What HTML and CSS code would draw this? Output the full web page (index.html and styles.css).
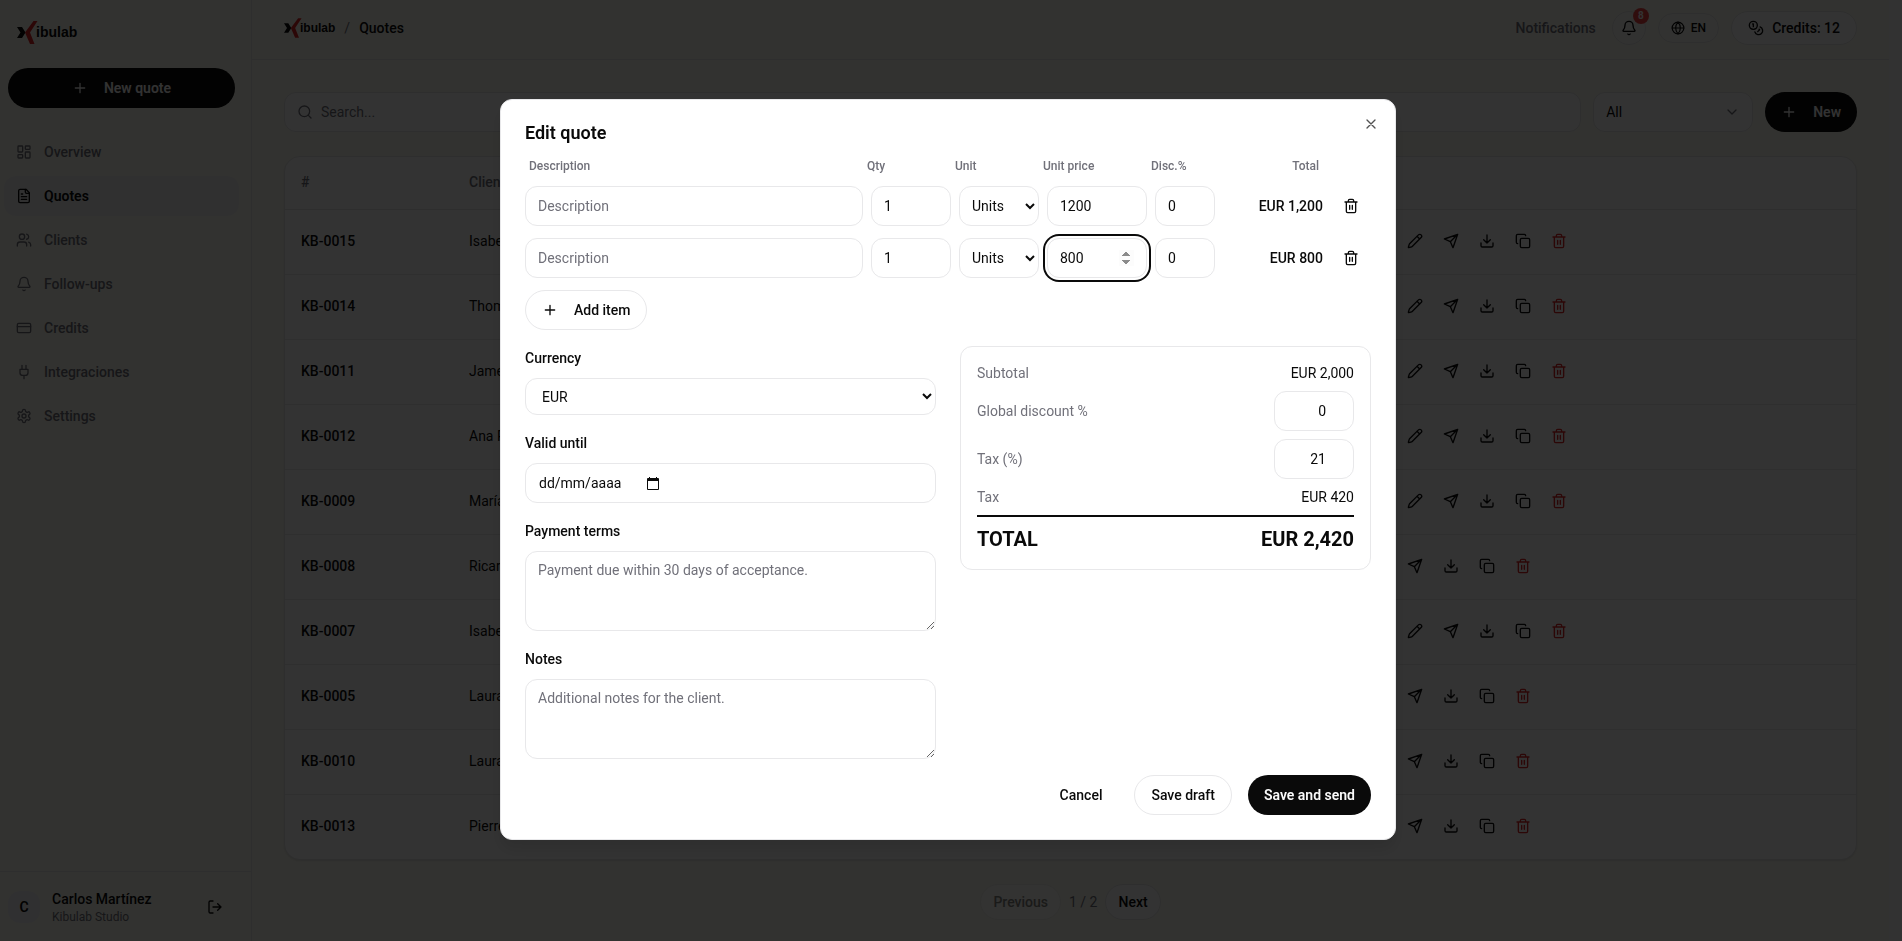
FILE: index.html
```
<!DOCTYPE html>
<html lang="en">
<head>
    <meta charset="UTF-8">
    <meta name="viewport" content="width=device-width, initial-scale=1.0">
    <title>Quotes - Kibulab</title>
    <link rel="stylesheet" href="styles.css">
</head>
<body>

<!-- Icon set -->
<svg class="sprite" aria-hidden="true">
    <symbol id="mark" viewBox="0 0 21 23">
        <path fill="#0a0a0a" d="M0 6h5l3.500 5.500L5 17H0l3.500-5.500z"/>
        <path fill="#dc2626" d="M16.500 0h4L13 11.500 17.500 23H13L8 11.500z"/>
    </symbol>
    <symbol id="plus" viewBox="0 0 24 24"><path d="M5 12h14M12 5v14"/></symbol>
    <symbol id="close" viewBox="0 0 24 24"><path d="M18 6 6 18M6 6l12 12"/></symbol>
    <symbol id="search" viewBox="0 0 24 24"><circle cx="11" cy="11" r="8"/><path d="m21 21-4.300-4.300"/></symbol>
    <symbol id="chevron" viewBox="0 0 24 24"><path d="m6 9 6 6 6-6"/></symbol>
    <symbol id="dashboard" viewBox="0 0 24 24"><rect x="3" y="3" width="7" height="9" rx="1"/><rect x="14" y="3" width="7" height="5" rx="1"/><rect x="14" y="12" width="7" height="9" rx="1"/><rect x="3" y="16" width="7" height="5" rx="1"/></symbol>
    <symbol id="file" viewBox="0 0 24 24"><path d="M15 2H6a2 2 0 0 0-2 2v16a2 2 0 0 0 2 2h12a2 2 0 0 0 2-2V7Z"/><path d="M14 2v4a2 2 0 0 0 2 2h4M10 9H8M16 13H8M16 17H8"/></symbol>
    <symbol id="users" viewBox="0 0 24 24"><path d="M16 21v-2a4 4 0 0 0-4-4H6a4 4 0 0 0-4 4v2"/><circle cx="9" cy="7" r="4"/><path d="M22 21v-2a4 4 0 0 0-3-3.870M16 3.130a4 4 0 0 1 0 7.750"/></symbol>
    <symbol id="bell" viewBox="0 0 24 24"><path d="M10.268 21a2 2 0 0 0 3.464 0"/><path d="M3.262 15.326A1 1 0 0 0 4 17h16a1 1 0 0 0 .74-1.673C19.410 13.956 18 12.499 18 8A6 6 0 0 0 6 8c0 4.499-1.411 5.956-2.738 7.326"/></symbol>
    <symbol id="card" viewBox="0 0 24 24"><rect x="2" y="5" width="20" height="14" rx="2"/><path d="M2 10h20"/></symbol>
    <symbol id="plug" viewBox="0 0 24 24"><path d="M12 22v-5M9 8V2M15 8V2M18 8v5a4 4 0 0 1-4 4h-4a4 4 0 0 1-4-4V8Z"/></symbol>
    <symbol id="settings" viewBox="0 0 24 24"><path d="M12.220 2h-.44a2 2 0 0 0-2 2v.18a2 2 0 0 1-1 1.730l-.43.25a2 2 0 0 1-2 0l-.15-.08a2 2 0 0 0-2.730.73l-.22.38a2 2 0 0 0 .73 2.730l.15.1a2 2 0 0 1 1 1.720v.51a2 2 0 0 1-1 1.740l-.15.09a2 2 0 0 0-.73 2.730l.22.38a2 2 0 0 0 2.730.73l.15-.08a2 2 0 0 1 2 0l.43.25a2 2 0 0 1 1 1.730V20a2 2 0 0 0 2 2h.44a2 2 0 0 0 2-2v-.18a2 2 0 0 1 1-1.730l.43-.25a2 2 0 0 1 2 0l.15.08a2 2 0 0 0 2.730-.73l.22-.39a2 2 0 0 0-.73-2.730l-.15-.08a2 2 0 0 1-1-1.740v-.5a2 2 0 0 1 1-1.740l.15-.09a2 2 0 0 0 .73-2.730l-.22-.38a2 2 0 0 0-2.730-.73l-.15.08a2 2 0 0 1-2 0l-.43-.25a2 2 0 0 1-1-1.730V4a2 2 0 0 0-2-2z"/><circle cx="12" cy="12" r="3"/></symbol>
    <symbol id="logout" viewBox="0 0 24 24"><path d="M9 21H5a2 2 0 0 1-2-2V5a2 2 0 0 1 2-2h4M16 17l5-5-5-5M21 12H9"/></symbol>
    <symbol id="globe" viewBox="0 0 24 24"><circle cx="12" cy="12" r="10"/><path d="M12 2a14.500 14.500 0 0 0 0 20 14.500 14.500 0 0 0 0-20M2 12h20"/></symbol>
    <symbol id="coins" viewBox="0 0 24 24"><circle cx="8" cy="8" r="6"/><path d="M18.090 10.370A6 6 0 1 1 10.340 18M7 6h1v4M16.710 13.880l.7.710-2.820 2.820"/></symbol>
    <symbol id="eye" viewBox="0 0 24 24"><path d="M2 12s4-7 10-7 10 7 10 7-4 7-10 7S2 12 2 12z"/><circle cx="12" cy="12" r="3"/></symbol>
    <symbol id="pencil" viewBox="0 0 24 24"><path d="M21.174 6.812a1 1 0 0 0-3.986-3.987L3.842 16.174a2 2 0 0 0-.5.830l-1.321 4.352a.5.5 0 0 0 .623.622l4.353-1.320a2 2 0 0 0 .83-.497zM15 5l4 4"/></symbol>
    <symbol id="send" viewBox="0 0 24 24"><path d="m22 2-7 20-4-9-9-4ZM22 2 11 13"/></symbol>
    <symbol id="download" viewBox="0 0 24 24"><path d="M21 15v4a2 2 0 0 1-2 2H5a2 2 0 0 1-2-2v-4M7 10l5 5 5-5M12 15V3"/></symbol>
    <symbol id="copy" viewBox="0 0 24 24"><rect x="8" y="8" width="14" height="14" rx="2"/><path d="M4 16c-1.100 0-2-.9-2-2V4c0-1.100.9-2 2-2h10c1.100 0 2 .9 2 2"/></symbol>
    <symbol id="trash" viewBox="0 0 24 24"><path d="M3 6h18M19 6v14c0 1-1 2-2 2H7c-1 0-2-1-2-2V6M8 6V4c0-1 1-2 2-2h4c1 0 2 1 2 2v2M10 11v6M14 11v6"/></symbol>
    <symbol id="calendar" viewBox="0 0 12 13"><path fill="currentColor" stroke="none" d="M1 1h1V0h1v1h6V0h1v1h1a1 1 0 0 1 1 1v10a1 1 0 0 1-1 1H1a1 1 0 0 1-1-1V2a1 1 0 0 1 1-1zm0 3v8h10V4z"/></symbol>
</svg>

<div class="app">
    <aside class="sidebar">
        <a class="logo brand" href="#" aria-label="Kibulab"><svg><use href="#mark"/></svg>ibulab</a>
        <button class="btn btn-primary new-quote"><svg class="icon"><use href="#plus"/></svg>New quote</button>
        <nav class="nav">
            <a href="#"><svg class="icon"><use href="#dashboard"/></svg>Overview</a>
            <a href="#" class="active"><svg class="icon"><use href="#file"/></svg>Quotes</a>
            <a href="#"><svg class="icon"><use href="#users"/></svg>Clients</a>
            <a href="#"><svg class="icon"><use href="#bell"/></svg>Follow-ups</a>
            <a href="#"><svg class="icon"><use href="#card"/></svg>Credits</a>
            <a href="#"><svg class="icon"><use href="#plug"/></svg>Integraciones</a>
            <a href="#"><svg class="icon"><use href="#settings"/></svg>Settings</a>
        </nav>
        <div class="user">
            <span class="avatar">C</span>
            <div class="user-info">
                <div class="user-name">Carlos Martínez</div>
                <div class="user-company">Kibulab Studio</div>
            </div>
            <button class="icon-btn" aria-label="Log out"><svg class="icon"><use href="#logout"/></svg></button>
        </div>
    </aside>

    <div class="main">
        <header class="topbar">
            <a class="logo logo-small" href="#" aria-label="Kibulab"><svg><use href="#mark"/></svg>ibulab</a>
            <span class="slash">/</span>
            <span class="crumb">Quotes</span>
            <div class="topbar-right">
                <span class="notif-label">Notifications</span>
                <button class="bell" aria-label="Notifications"><svg class="icon"><use href="#bell"/></svg><span class="badge">8</span></button>
                <button class="lang"><svg class="icon icon-sm"><use href="#globe"/></svg>EN</button>
                <a class="credits" href="#"><svg class="icon"><use href="#coins"/></svg>Credits: 12</a>
            </div>
        </header>

        <main class="content">
            <div class="toolbar">
                <label class="search"><svg class="icon"><use href="#search"/></svg><input type="text" placeholder="Search..." aria-label="Search"></label>
                <button class="filter">All<svg class="icon"><use href="#chevron"/></svg></button>
                <button class="btn btn-primary"><svg class="icon"><use href="#plus"/></svg>New</button>
            </div>

            <div class="card">
                <table class="quotes">
                    <colgroup><col class="col-number"><col><col class="col-actions"></colgroup>
                    <thead>
                        <tr><th>#</th><th>Client</th><th aria-label="Actions"></th></tr>
                    </thead>
                    <tbody id="quoteRows"></tbody>
                </table>
            </div>

            <div class="pager">
                <button disabled>Previous</button>
                <span>1 / 2</span>
                <button>Next</button>
            </div>
        </main>
    </div>
</div>

<div class="overlay">
    <form class="modal" role="dialog" aria-labelledby="modalTitle">
        <button type="button" class="close" aria-label="Close"><svg class="icon"><use href="#close"/></svg></button>
        <h2 id="modalTitle">Edit quote</h2>

        <div class="items">
            <div class="item-grid item-head">
                <span>Description</span><span>Qty</span><span>Unit</span><span>Unit price</span><span>Disc.%</span><span class="right">Total</span>
            </div>
            <div class="item-grid">
                <input class="field" type="text" placeholder="Description" aria-label="Description">
                <input class="field" type="number" value="1" aria-label="Qty">
                <select class="field unit" aria-label="Unit"><option>Units</option></select>
                <input class="field" type="number" value="1200" aria-label="Unit price">
                <input class="field" type="number" value="0" aria-label="Discount">
                <span class="item-total">EUR 1,200</span>
                <button type="button" class="icon-btn" aria-label="Remove item"><svg class="icon"><use href="#trash"/></svg></button>
            </div>
            <div class="item-grid">
                <input class="field" type="text" placeholder="Description" aria-label="Description">
                <input class="field" type="number" value="1" aria-label="Qty">
                <select class="field unit" aria-label="Unit"><option>Units</option></select>
                <input class="field" type="number" value="800" aria-label="Unit price" id="price">
                <input class="field" type="number" value="0" aria-label="Discount">
                <span class="item-total">EUR 800</span>
                <button type="button" class="icon-btn" aria-label="Remove item"><svg class="icon"><use href="#trash"/></svg></button>
            </div>
            <button type="button" class="btn btn-outline add-item"><svg class="icon"><use href="#plus"/></svg>Add item</button>
        </div>

        <div class="details">
            <div class="form-column">
                <div class="form-group">
                    <label for="currency">Currency</label>
                    <select class="field currency" id="currency"><option>EUR</option></select>
                </div>
                <div class="form-group">
                    <label for="validUntil">Valid until</label>
                    <div class="field date">
                        <input type="text" id="validUntil" placeholder="dd/mm/aaaa">
                        <button type="button" aria-label="Pick a date"><svg class="icon-calendar"><use href="#calendar"/></svg></button>
                    </div>
                </div>
                <div class="form-group">
                    <label for="terms">Payment terms</label>
                    <textarea class="field" id="terms" placeholder="Payment due within 30 days of acceptance."></textarea>
                </div>
                <div class="form-group">
                    <label for="notes">Notes</label>
                    <textarea class="field" id="notes" placeholder="Additional notes for the client."></textarea>
                </div>
            </div>

            <div class="totals">
                <div class="line"><span>Subtotal</span><b>EUR 2,000</b></div>
                <div class="line"><label for="discount">Global discount %</label><input class="field" type="number" id="discount" value="0"></div>
                <div class="line"><label for="tax">Tax (%)</label><input class="field" type="number" id="tax" value="21"></div>
                <div class="line"><span>Tax</span><b>EUR 420</b></div>
                <div class="grand-total"><span>TOTAL</span><span>EUR 2,420</span></div>
            </div>
        </div>

        <div class="modal-footer">
            <button type="button" class="btn">Cancel</button>
            <button type="button" class="btn btn-outline">Save draft</button>
            <button type="button" class="btn btn-primary">Save and send</button>
        </div>
    </form>
</div>

<script>
    const quotes = [
        ["KB-0015", "Isabel", true],
        ["KB-0014", "Thomas", true],
        ["KB-0011", "James", true],
        ["KB-0012", "Ana P.", true],
        ["KB-0009", "María", true],
        ["KB-0008", "Ricardo", false],
        ["KB-0007", "Isabel", true],
        ["KB-0005", "Laura", false],
        ["KB-0010", "Laura", false],
        ["KB-0013", "Pierre", false]
    ];

    function action(name) {
        return `<button class="action ${name}" aria-label="${name}"><svg class="icon"><use href="#${name}"/></svg></button>`;
    }

    document.getElementById("quoteRows").innerHTML = quotes.map(([number, client, editable]) => {
        const names = ["eye", "pencil", "send", "download", "copy", "trash"].filter(n => editable || n !== "pencil");
        return `<tr><td class="number">${number}</td><td>${client}</td><td><div class="actions">${names.map(action).join("")}</div></td></tr>`;
    }).join("");

    // Focus the price with the caret after the last digit
    const price = document.getElementById("price");
    const value = price.value;
    price.focus();
    price.value = "";
    price.value = value;
</script>

</body>
</html>
```
FILE: styles.css
```
* {
    box-sizing: border-box;
}

body {
    font-family: Roboto, 'Liberation Sans', sans-serif;
    font-size: 14px;
    line-height: 20px;
    color: #0a0a0a;
    background-color: #fafafa;
    margin: 0;
    padding-right: 13px;
    height: 100vh;
    overflow: hidden;
}

button,
input,
select,
textarea {
    font: inherit;
    color: inherit;
}

button {
    background: none;
    border: none;
    padding: 0;
    cursor: pointer;
}

a {
    color: inherit;
    text-decoration: none;
}

.sprite {
    display: none;
}

.icon {
    width: 16px;
    height: 16px;
    flex: none;
    fill: none;
    stroke: currentColor;
    stroke-width: 2;
    stroke-linecap: round;
    stroke-linejoin: round;
}

.icon-sm {
    width: 14px;
    height: 14px;
}

.btn {
    display: inline-flex;
    align-items: center;
    justify-content: center;
    gap: 16px;
    height: 40px;
    padding: 0 16px;
    border-radius: 20px;
    font-weight: 500;
}

.btn-primary {
    background-color: #0a0a0a;
    color: #fafafa;
    font-weight: 600;
}

.btn-outline {
    border: 1px solid #e8e8ea;
    background-color: #fff;
}

.icon-btn {
    display: flex;
    align-items: center;
    justify-content: center;
    width: 40px;
    height: 40px;
}

/* Logo */
.logo {
    display: flex;
    align-items: center;
    font-family: 'Liberation Sans', Arial, sans-serif;
    font-size: 14px;
    font-weight: 700;
}

.logo svg {
    width: 21px;
    height: 23px;
    margin-right: -2px;
}

.logo-small {
    font-size: 12px;
}

.logo-small svg {
    width: 18px;
    height: 20px;
}

/* Page */
.app {
    display: flex;
    height: 100vh;
    background-color: #fafaf0;
}

.sidebar {
    width: 252px;
    flex: none;
    display: flex;
    flex-direction: column;
    border-right: 1px solid #e5e5e5;
}

.brand {
    height: 68px;
    padding: 0 17px 4px;
}

.new-quote {
    margin: 0 16px 0 8px;
}

.nav {
    flex: 1;
    display: flex;
    flex-direction: column;
    gap: 4px;
    padding: 24px 12px 0 4px;
}

.nav a {
    display: flex;
    align-items: center;
    gap: 12px;
    height: 40px;
    padding: 0 12px 1px;
    border-radius: 12px;
    font-weight: 500;
    color: #71717a;
}

.nav a.active {
    background-color: #f0f0f0;
    color: #0a0a0a;
    font-weight: 600;
}

.user {
    display: flex;
    align-items: center;
    height: 70px;
    padding: 0 16px 0 8px;
    border-top: 1px solid #e5e5e5;
}

.avatar {
    width: 32px;
    height: 32px;
    border-radius: 12px;
    background-color: #f0f0f2;
    font-weight: 600;
    line-height: 32px;
    text-align: center;
}

.user-info {
    flex: 1;
    padding-left: 12px;
}

.user-name {
    font-weight: 500;
}

.user-company {
    font-size: 12px;
    line-height: 16px;
    color: #71717a;
}

.main {
    flex: 1;
    min-width: 0;
}

.topbar {
    display: flex;
    align-items: center;
    height: 60px;
    padding: 0 32px 4px;
    border-bottom: 1px solid #e5e5e5;
}

.slash {
    margin: 0 9px;
    color: #71717a;
}

.crumb {
    font-weight: 500;
}

.topbar-right {
    display: flex;
    align-items: center;
    gap: 12px;
    margin-left: auto;
    font-weight: 500;
}

.notif-label {
    margin-right: 4px;
    color: #71717a;
}

.bell,
.lang,
.credits {
    display: flex;
    align-items: center;
    justify-content: center;
    height: 34px;
    border: 1px solid #e5e5e5;
    border-radius: 17px;
    background-color: #fafaf5;
}

.bell {
    position: relative;
    width: 34px;
}

.badge {
    position: absolute;
    top: -4px;
    right: -4px;
    width: 16px;
    height: 16px;
    border-radius: 8px;
    background-color: #ef4444;
    color: #fff;
    font-size: 10px;
    font-weight: 700;
    line-height: 16px;
}

.lang {
    gap: 6px;
    height: 30px;
    padding: 0 12px;
    font-size: 12px;
    font-weight: 500;
}

.credits {
    gap: 8px;
    padding: 0 16px;
    background-color: #fff;
}

.content {
    padding: 32px;
}

.toolbar {
    display: flex;
    gap: 12px;
    margin-bottom: 24px;
}

.search,
.filter {
    display: flex;
    align-items: center;
    height: 40px;
    padding: 0 12px;
    border: 1px solid #e5e5e5;
    border-radius: 12px;
    background-color: #fff;
}

.search {
    flex: 1;
    gap: 8px;
    color: #71717a;
}

.search input {
    flex: 1;
    border: none;
    padding: 0;
    background: none;
}

.filter {
    width: 160px;
    justify-content: space-between;
}

.filter .icon {
    color: #71717a;
}

.card {
    border: 1px solid #e5e5e5;
    border-radius: 16px;
    background-color: #fff;
    box-shadow: 0 1px 2px rgba(0, 0, 0, 0.1);
}

.quotes {
    width: 100%;
    table-layout: fixed;
    border-collapse: separate;
    border-spacing: 0;
}

.col-number {
    width: 168px;
}

.col-actions {
    width: 511px;
}

.quotes th {
    height: 53px;
    padding: 0 16px 2px;
    border-bottom: 1px solid #e5e5e5;
    color: #71717a;
    font-weight: 500;
    text-align: left;
}

.quotes td {
    height: 65px;
    padding: 0 16px 2px;
    border-bottom: 1px solid #ebebeb;
}

.quotes tr:last-child td {
    height: 64px;
    border-bottom: none;
}

.quotes .number {
    font-weight: 500;
}

.actions {
    display: flex;
}

.action {
    display: flex;
    align-items: center;
    justify-content: center;
    width: 36px;
    height: 36px;
}

.action.trash {
    color: #dc2626;
}

.pager {
    display: flex;
    align-items: center;
    justify-content: center;
    gap: 8px;
    margin-top: 24px;
    color: #71717a;
}

.pager button {
    height: 36px;
    padding: 0 12px;
    border: 1px solid #e5e5e5;
    border-radius: 18px;
    background-color: #fff;
    color: #0a0a0a;
    font-weight: 500;
}

.pager button:disabled {
    opacity: 0.5;
}

/* Dialog */
.overlay {
    position: fixed;
    inset: 0;
    display: flex;
    align-items: center;
    justify-content: center;
    padding: 0 6px 2px 0;
    background-color: rgba(0, 0, 0, 0.8);
}

.modal {
    position: relative;
    display: flex;
    flex-direction: column;
    gap: 16px;
    width: 100%;
    max-width: 896px;
    padding: 24px;
    border: 1px solid #e8e8ea;
    border-radius: 12px;
    background-color: #fff;
    box-shadow: 0 10px 15px rgba(0, 0, 0, 0.1);
}

.modal h2 {
    margin: 0;
    font-size: 18px;
    font-weight: 600;
    line-height: 18px;
}

.close {
    position: absolute;
    top: 16px;
    right: 16px;
    display: flex;
    opacity: 0.7;
}

.items {
    display: flex;
    flex-direction: column;
    gap: 12px;
}

.item-grid {
    display: grid;
    grid-template-columns: 1fr 80px 80px 100px 60px 100px 40px;
    gap: 8px;
    align-items: center;
}

.item-head {
    padding: 0 4px;
    font-size: 12px;
    font-weight: 500;
    line-height: 16px;
    color: #71717a;
}

.right,
.item-total {
    text-align: right;
}

.item-total {
    font-weight: 500;
}

.field {
    width: 100%;
    min-width: 0;
    height: 40px;
    padding: 8px 12px;
    border: 1px solid #e8e8ea;
    border-radius: 12px;
    background-color: #fff;
}

::placeholder {
    color: #71717a;
    opacity: 1;
}

.field:focus {
    outline: none;
    box-shadow: 0 0 0 2px #fff, 0 0 0 4px #0a0a0a;
}

.field:focus::-webkit-inner-spin-button {
    opacity: 1;
}

.unit {
    padding: 8px;
}

.currency {
    height: 37px;
}

.add-item {
    align-self: flex-start;
}

.details {
    display: grid;
    grid-template-columns: 1fr 1fr;
    align-items: start;
    gap: 24px;
}

.form-column {
    display: flex;
    flex-direction: column;
    gap: 16px;
}

.form-group label {
    display: block;
    margin-bottom: 8px;
    font-weight: 500;
    line-height: 24px;
}

.form-group textarea {
    display: block;
    height: 80px;
    resize: vertical;
}

.form-group select {
    display: block;
}

.date {
    display: flex;
    align-items: center;
}

.date input {
    width: 109px;
    border: none;
    padding: 0 1px;
    background: none;
    outline: none;
}

.date input::placeholder {
    color: #0a0a0a;
}

.icon-calendar {
    display: block;
    width: 12px;
    height: 13px;
}

.totals {
    display: flex;
    flex-direction: column;
    gap: 8px;
    padding: 16px;
    border: 1px solid #e8e8ea;
    border-radius: 12px;
}

.line {
    display: flex;
    align-items: center;
    justify-content: space-between;
    color: #71717a;
}

.line b {
    color: #0a0a0a;
    font-weight: 400;
}

.line .field {
    width: 80px;
    color: #0a0a0a;
    text-align: right;
}

.grand-total {
    display: flex;
    justify-content: space-between;
    padding-top: 8px;
    border-top: 2px solid #0a0a0a;
    font-size: 20px;
    font-weight: 700;
    line-height: 28px;
}

.modal-footer {
    display: flex;
    justify-content: flex-end;
    gap: 16px;
}
```
